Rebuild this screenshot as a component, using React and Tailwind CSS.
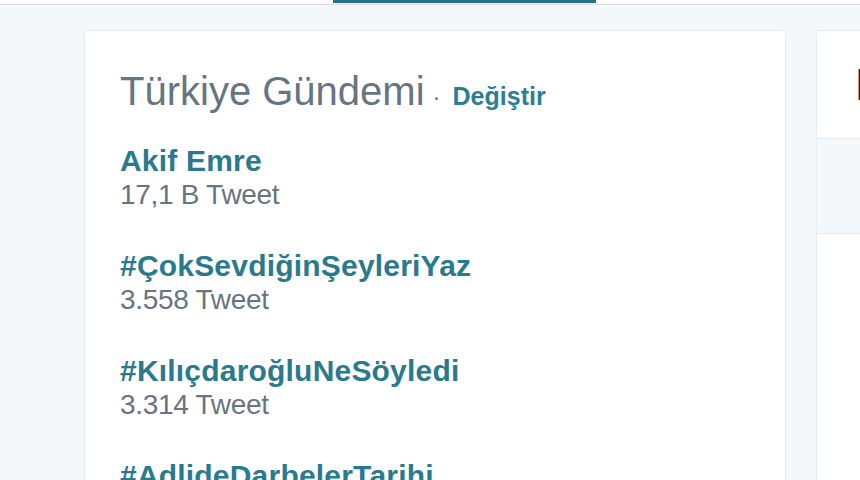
export default function App() {
  const trends = [
    { name: "Akif Emre", count: "17,1 B Tweet" },
    { name: "#ÇokSevdiğinŞeyleriYaz", count: "3.558 Tweet" },
    { name: "#KılıçdaroğluNeSöyledi", count: "3.314 Tweet" },
    { name: "#AdlideDarbelerTarihi", count: "1.902 Tweet" },
  ];

  return (
    <div
      className="w-[860px] h-[480px] overflow-hidden bg-[#f5f8fa]"
      style={{ fontFamily: '"Liberation Sans", Arial, sans-serif' }}
    >
      <div className="h-[5px] bg-white border-b border-[#d8dee3] flex">
        <div className="ml-[333px] w-[263px] h-[3px] bg-[#2a6f8a]" />
      </div>

      <div className="flex gap-[30px] pl-[84px] pt-[25px]">
        <div className="w-[702px] shrink-0 h-[500px] bg-white border border-[#e6ecf0] rounded-[4px] pl-[35px] pt-[36px]">
          <div className="flex items-baseline text-[40px] leading-[48px] text-[#66757f]">
            <span>Türkiye Gündemi</span>
            <span className="text-[24px] ml-[8px] mr-[12px]">·</span>
            <a className="text-[25px] font-bold text-[#2b7f93]">Değiştir</a>
          </div>

          <div className="mt-[22px] flex flex-col gap-[37px]">
            {trends.map((t) => (
              <div key={t.name}>
                <div className="text-[30px] leading-[36px] font-bold text-[#2a7a8e] tracking-[0.2px]">
                  {t.name}
                </div>
                <div className="text-[28px] leading-[32px] text-[#66757f] tracking-[-0.3px]">
                  {t.count}
                </div>
              </div>
            ))}
          </div>
        </div>

        <div className="flex-1 h-[500px] bg-white border border-[#e6ecf0] rounded-l-[4px] border-r-0">
          <div className="h-[107px] pl-[38px] pt-[30px] text-[44px] leading-[48px] text-[#14171a]">
            H
          </div>
          <div className="h-[96px] bg-[#f5f8fa] border-y border-[#e1e8ed]" />
        </div>
      </div>
    </div>
  );
}
